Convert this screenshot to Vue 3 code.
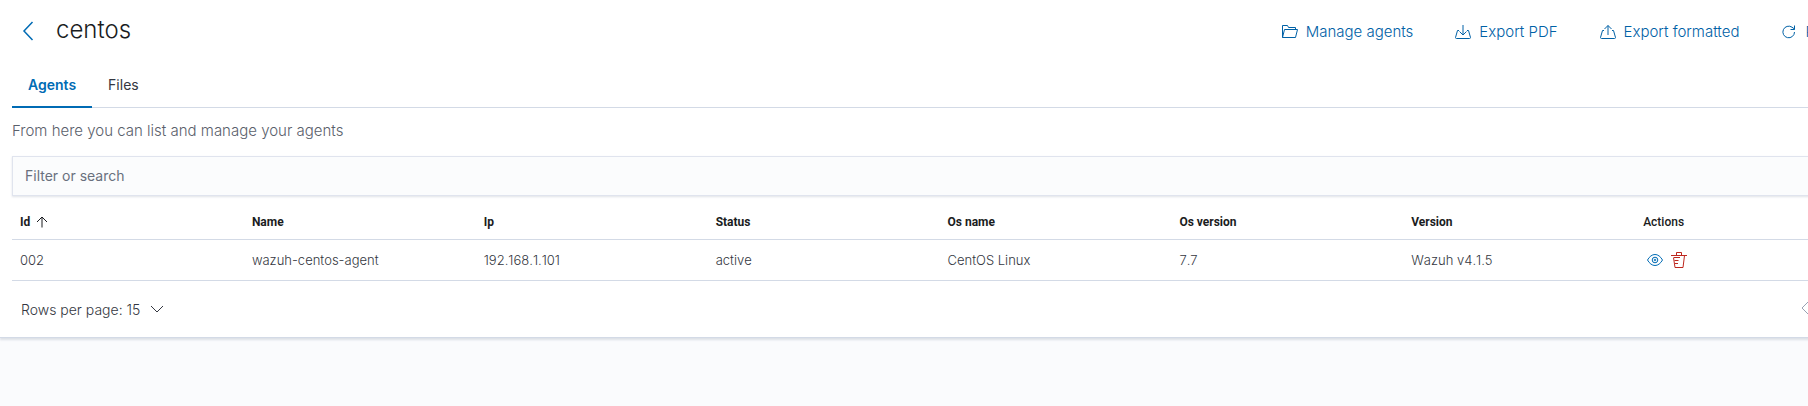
<script setup>
import { ref } from 'vue'

const query = ref('')
const columns = ['Id', 'Name', 'Ip', 'Status', 'Os name', 'Os version', 'Version']
const agents = [
  ['002', 'wazuh-centos-agent', '192.168.1.101', 'active', 'CentOS Linux', '7.7', 'Wazuh v4.1.5'],
]
const actions = [
  { label: 'Manage agents', icon: 'M.5 13.500V1.500h5l1 2h7v2M.5 13.500l2-8h13l-2 8z' },
  { label: 'Export PDF', icon: 'M4 6.500H2.500L.5 13.500a1 1 0 0 0 1 1h13a1 1 0 0 0 1-1L13.500 6.500H12M8 1v9.500M4.500 7.500 8 11l3.500-3.500' },
  { label: 'Export formatted', icon: 'M4 6.500H2.500L.5 13.500a1 1 0 0 0 1 1h13a1 1 0 0 0 1-1L13.500 6.500H12M8 11V1.500M4.500 5 8 1.500 11.500 5' },
  { label: 'Refresh', icon: 'M13.500 8A5.800 5.800 0 1 1 11 3.200L13.500 5M13.500 1.500V5.500H9.500' },
]
</script>

<template>
  <div class="viewport">
    <main class="panel">
      <header class="header">
        <button class="back" type="button" aria-label="Back">
          <svg width="12" height="20" viewBox="0 0 12 20"><path d="M10.500 1 2 10l8.500 9" /></svg>
        </button>
        <h1>centos</h1>
        <div class="actions">
          <button v-for="a in actions" :key="a.label" class="action" type="button">
            <svg width="16" height="16" viewBox="0 0 16 16"><path :d="a.icon" /></svg>
            <span>{{ a.label }}</span>
          </button>
        </div>
      </header>

      <div class="tabs" role="tablist">
        <button class="tab active" type="button" role="tab" aria-selected="true">Agents</button>
        <button class="tab" type="button" role="tab" aria-selected="false">Files</button>
      </div>

      <p class="description">From here you can list and manage your agents</p>

      <input v-model="query" class="search" type="text" aria-label="Filter or search" placeholder="Filter or search" />

      <table>
        <thead>
          <tr>
            <th v-for="(c, i) in columns" :key="c" scope="col">
              <button class="sort" type="button">
                {{ c }}
                <svg v-if="i === 0" width="12" height="12" viewBox="0 0 12 12"><path d="M6 11.500V1M1 6l5-5 5 5" /></svg>
              </button>
            </th>
            <th class="plain" scope="col">Actions</th>
          </tr>
        </thead>
        <tbody>
          <tr v-for="row in agents" :key="row[0]">
            <td v-for="cell in row" :key="cell">{{ cell }}</td>
            <td>
              <div class="row-actions">
                <button class="icon view" type="button" aria-label="View agent">
                  <svg width="16" height="16" viewBox="0 0 16 16">
                    <path d="M.5 8C2.500 4.500 5 2.500 8 2.500s5.500 2 7.500 5.500c-2 3.500-4.500 5.500-7.500 5.500S2.500 11.500.5 8z" />
                    <circle cx="8" cy="8" r="2.800" /><circle cx="8" cy="8" r="0.800" />
                  </svg>
                </button>
                <button class="icon remove" type="button" aria-label="Remove agent">
                  <svg width="16" height="16" viewBox="0 0 16 16">
                    <path d="M0 3.500h16M5.500 3.500v-3h5v3M2.500 5.500l1.500 10h8l1.500-12M3 5.500h6M3.500 8.500h4M4 11.500h3" />
                  </svg>
                </button>
              </div>
            </td>
          </tr>
        </tbody>
      </table>

      <footer class="footer">
        <button class="rows" type="button">
          Rows per page: 15
          <svg width="14" height="8" viewBox="0 0 14 8"><path d="M1 1l6 6 6-6" /></svg>
        </button>
        <nav class="pager" aria-label="Pagination">
          <button class="prev" type="button" aria-label="Previous page">
            <svg width="8" height="14" viewBox="0 0 8 14"><path d="M7 1 1 7l6 6" /></svg>
          </button>
        </nav>
      </footer>
    </main>
  </div>
</template>

<style>
body {
  background: #fafbfd;
}
</style>

<style scoped>
.viewport {
  overflow: hidden;
  padding-bottom: 16px;
  font-family: Inter, "Liberation Sans", sans-serif;
  font-size: 14px;
  color: #343741;
}

/* The panel is wider than the window; its right edge is clipped. */
.panel {
  box-sizing: border-box;
  width: calc(100% + 71px);
  padding: 0 12px;
  background: #fff;
  border-bottom: 1px solid #d3dae6;
  box-shadow: 0 2px 2px rgba(152, 162, 179, 0.3);
}

button {
  margin: 0;
  padding: 0;
  border: 0;
  background: none;
  font: inherit;
  color: inherit;
  cursor: pointer;
}

svg {
  display: block;
  flex: none;
  fill: none;
  stroke: currentColor;
}

.header {
  display: flex;
  align-items: center;
  height: 62px;
}

.back {
  padding: 0 10px;
  color: #006bb4;
}

.back svg {
  stroke-width: 1.500;
}

h1 {
  margin: 0 0 2px 12px;
  font-size: 24px;
  line-height: 32px;
  font-weight: 300;
  color: #1a1c21;
}

.actions {
  display: flex;
  gap: 26px;
  margin-left: auto;
}

.action {
  display: flex;
  align-items: center;
  gap: 8px;
  padding: 2px 8px 0;
  font-size: 15px;
  line-height: 24px;
  font-weight: 300;
  color: #0061a6;
}

.tabs {
  display: flex;
  box-shadow: inset 0 -1px 0 #d3dae6;
}

.tab {
  padding: 11px 16px 10px;
  border-bottom: 2px solid transparent;
  font-size: 14px;
  line-height: 23px;
}

.tab.active {
  border-color: #006bb4;
  font-weight: 600;
  color: #006bb4;
}

.description {
  margin: 11px 0 13px;
  font-size: 15px;
  line-height: 24px;
  font-weight: 300;
  color: #5a606b;
}

.search {
  display: block;
  box-sizing: border-box;
  width: 100%;
  height: 40px;
  padding: 0 12px 2px;
  border: 1px solid #e0e4ee;
  border-radius: 0;
  outline: 0;
  background: #fbfcfd;
  box-shadow: 0 1px 2px rgba(152, 162, 179, 0.3);
  font: inherit;
}

.search::placeholder {
  color: #69707d;
  opacity: 1;
}

table {
  width: 100%;
  table-layout: fixed;
  border-collapse: collapse;
}

th,
td {
  padding: 0 8px;
  border-bottom: 1px solid #d3dae6;
  text-align: left;
}

th {
  height: 34px;
  padding-top: 9px;
  font-family: Roboto, "Liberation Sans", sans-serif;
  font-size: 12px;
  font-weight: 700;
  color: #1a1c21;
}

th.plain {
  font-weight: 500;
}

td {
  height: 40px;
  font-size: 13px;
  font-weight: 300;
  font-kerning: none;
  font-feature-settings: "calt" 0;
}

.sort {
  display: flex;
  align-items: center;
  gap: 6px;
}

.row-actions {
  display: flex;
  gap: 8px;
  padding-left: 4px;
}

.view {
  color: #006bb4;
}

.remove {
  color: #bd271e;
}

.footer {
  display: flex;
  align-items: center;
  justify-content: space-between;
  height: 56px;
}

.rows {
  display: flex;
  align-items: center;
  gap: 10px;
  padding-left: 9px;
  font-weight: 300;
}

.pager {
  padding-right: 58px;
  color: #98a2b3;
}
</style>
